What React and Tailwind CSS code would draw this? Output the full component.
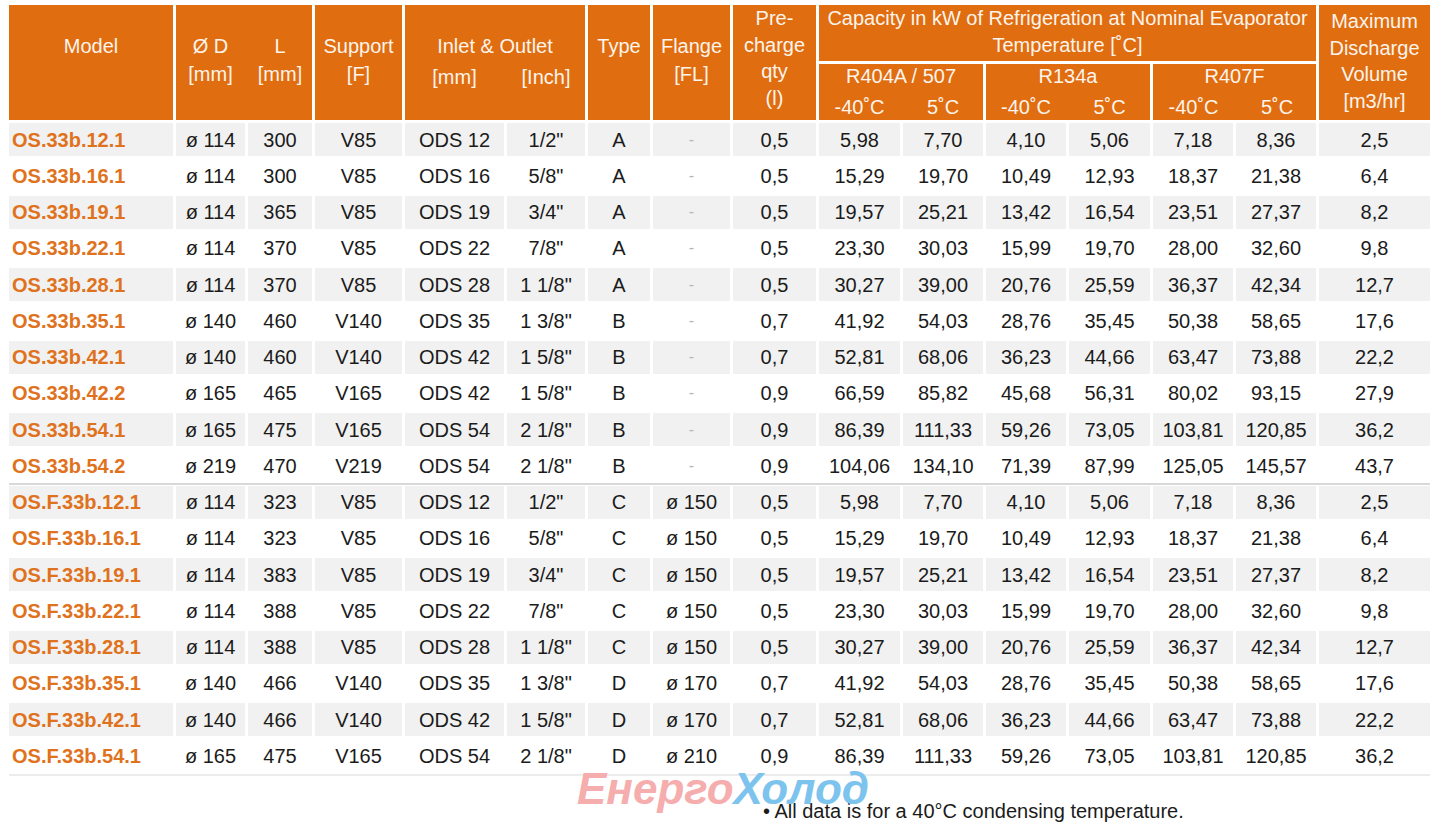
import React from 'react';

const GRID = 'grid grid-cols-[164px_69px_64px_87px_99px_78px_62px_77px_83px_81px_80px_80px_81px_80px_80px_111px] gap-x-[3px]';

const rows = [
    'OS.33b.12.1|ø 114|300|V85|ODS 12|1/2"|A|-|0,5|5,98|7,70|4,10|5,06|7,18|8,36|2,5',
    'OS.33b.16.1|ø 114|300|V85|ODS 16|5/8"|A|-|0,5|15,29|19,70|10,49|12,93|18,37|21,38|6,4',
    'OS.33b.19.1|ø 114|365|V85|ODS 19|3/4"|A|-|0,5|19,57|25,21|13,42|16,54|23,51|27,37|8,2',
    'OS.33b.22.1|ø 114|370|V85|ODS 22|7/8"|A|-|0,5|23,30|30,03|15,99|19,70|28,00|32,60|9,8',
    'OS.33b.28.1|ø 114|370|V85|ODS 28|1 1/8"|A|-|0,5|30,27|39,00|20,76|25,59|36,37|42,34|12,7',
    'OS.33b.35.1|ø 140|460|V140|ODS 35|1 3/8"|B|-|0,7|41,92|54,03|28,76|35,45|50,38|58,65|17,6',
    'OS.33b.42.1|ø 140|460|V140|ODS 42|1 5/8"|B|-|0,7|52,81|68,06|36,23|44,66|63,47|73,88|22,2',
    'OS.33b.42.2|ø 165|465|V165|ODS 42|1 5/8"|B|-|0,9|66,59|85,82|45,68|56,31|80,02|93,15|27,9',
    'OS.33b.54.1|ø 165|475|V165|ODS 54|2 1/8"|B|-|0,9|86,39|111,33|59,26|73,05|103,81|120,85|36,2',
    'OS.33b.54.2|ø 219|470|V219|ODS 54|2 1/8"|B|-|0,9|104,06|134,10|71,39|87,99|125,05|145,57|43,7',
    'OS.F.33b.12.1|ø 114|323|V85|ODS 12|1/2"|C|ø 150|0,5|5,98|7,70|4,10|5,06|7,18|8,36|2,5',
    'OS.F.33b.16.1|ø 114|323|V85|ODS 16|5/8"|C|ø 150|0,5|15,29|19,70|10,49|12,93|18,37|21,38|6,4',
    'OS.F.33b.19.1|ø 114|383|V85|ODS 19|3/4"|C|ø 150|0,5|19,57|25,21|13,42|16,54|23,51|27,37|8,2',
    'OS.F.33b.22.1|ø 114|388|V85|ODS 22|7/8"|C|ø 150|0,5|23,30|30,03|15,99|19,70|28,00|32,60|9,8',
    'OS.F.33b.28.1|ø 114|388|V85|ODS 28|1 1/8"|C|ø 150|0,5|30,27|39,00|20,76|25,59|36,37|42,34|12,7',
    'OS.F.33b.35.1|ø 140|466|V140|ODS 35|1 3/8"|D|ø 170|0,7|41,92|54,03|28,76|35,45|50,38|58,65|17,6',
    'OS.F.33b.42.1|ø 140|466|V140|ODS 42|1 5/8"|D|ø 170|0,7|52,81|68,06|36,23|44,66|63,47|73,88|22,2',
    'OS.F.33b.54.1|ø 165|475|V165|ODS 54|2 1/8"|D|ø 210|0,9|86,39|111,33|59,26|73,05|103,81|120,85|36,2',
].map(r => r.split('|'));

const Head = ({ className = '', children }) => (
    <div className={`bg-[#e06d0f] text-[#fdf4ec] text-center ${className}`}>{children}</div>
);

const App = () => {
    return (
        <div className="relative w-[1443px] h-[826px] bg-white font-['Liberation_Sans',Arial,sans-serif] text-[20px] text-[#1b1b1b] overflow-hidden">
            <div className="pl-[9px] pt-[5px] w-[1430px]">
                {/* Header */}
                <div className={`${GRID} grid-rows-[56px_56px] gap-y-[3px]`}>
                    <Head className="row-span-2 pt-[27px] leading-[28px]">Model</Head>
                    <Head className="col-span-2 row-span-2 pt-[27px] leading-[28px] grid grid-cols-[69px_64px] gap-x-[3px]">
                        <div>Ø D<br />[mm]</div>
                        <div>L<br />[mm]</div>
                    </Head>
                    <Head className="row-span-2 pt-[27px] leading-[28px]">Support<br />[F]</Head>
                    <Head className="col-span-2 row-span-2 pt-[27px] leading-[28px]">
                        <div>Inlet &amp; Outlet</div>
                        <div className="grid grid-cols-[99px_78px] gap-x-[3px] mt-[3px]">
                            <span>[mm]</span>
                            <span>[Inch]</span>
                        </div>
                    </Head>
                    <Head className="row-span-2 pt-[27px] leading-[28px]">Type</Head>
                    <Head className="row-span-2 pt-[27px] leading-[28px]">Flange<br />[FL]</Head>
                    <Head className="row-span-2 leading-[26.5px]">Pre-<br />charge<br />qty<br />(l)</Head>
                    <Head className="col-span-6 leading-[27px]">Capacity in kW of Refrigeration at Nominal Evaporator<br />Temperature [˚C]</Head>
                    <Head className="row-span-2 pt-[3px] leading-[26.7px]">Maximum<br />Discharge<br />Volume<br />[m3/hr]</Head>
                    {['R404A / 507', 'R134a', 'R407F'].map((g, i) => (
                        <Head key={g} className="col-span-2 leading-[24px]">
                            <div>{g}</div>
                            <div className={`grid ${i === 1 ? 'grid-cols-[80px_81px]' : 'grid-cols-[81px_80px]'} gap-x-[3px] mt-[7px]`}>
                                <span>-40˚C</span>
                                <span>5˚C</span>
                            </div>
                        </Head>
                    ))}
                </div>

                {/* Body */}
                {rows.map((r, i) => (
                    <div key={r[0]} className={i === 10 ? 'border-t-2 border-[#d8d8d8] pt-[1px]' : 'pt-[3px]'}>
                        <div className={`${GRID} h-[33.25px]`}>
                            {r.map((c, j) => (
                                <div
                                    key={j}
                                    className={`flex items-center ${i % 2 === 0 ? 'bg-[#f1f1f1]' : 'bg-white'} ${j === 0 ? 'pl-[3px] font-bold text-[#e0721d]' : 'justify-center'} ${c === '-' ? 'text-[#b5b5b5] text-[16px]' : ''}`}
                                >
                                    {c}
                                </div>
                            ))}
                        </div>
                    </div>
                ))}
                <div className="mt-[1px] h-[2px] bg-[#ececec]"></div>

                {/* Footer note */}
                <p className="pl-[754px] mt-[23px] leading-[24px]">• All data is for a 40°C condensing temperature.</p>
            </div>

            {/* Watermark */}
            <div className="absolute left-[577px] top-[772px] font-bold italic text-[44px] leading-[34px] whitespace-nowrap select-none pointer-events-none">
                <span className="text-[#f5adad]">Енерго</span>
                <span className="text-[#7cc3ee]">Холод</span>
            </div>
        </div>
    );
};

export default App;
